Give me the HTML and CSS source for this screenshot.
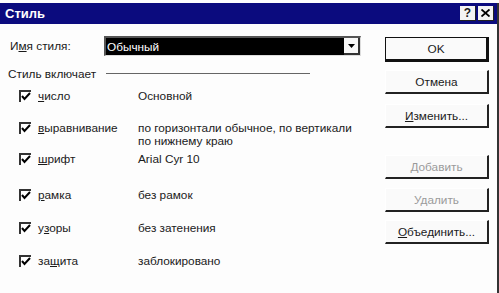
FILE: index.html
```html
<!DOCTYPE html>
<html lang="ru">
<head>
  <meta charset="UTF-8" />
  <title>Стиль</title>
  <link rel="stylesheet" href="styles.css">
</head>
<body>
  <div class="window">
    <div class="titlebar">
      <span class="title">Стиль</span>
      <div class="caption-btns">
        <span class="cap-btn">?</span>
        <span class="cap-btn close">
          <svg width="9" height="8" viewBox="0 0 9 8"><path d="M0.5 0.5 L8.5 7.5 M8.5 0.5 L0.5 7.5" stroke="#000" stroke-width="1.8" fill="none"/></svg>
        </span>
      </div>
    </div>

    <div class="content">
      <div class="left">
        <div class="name-row">
          <label class="name-label">И<u>м</u>я стиля:</label>
          <div class="combo">
            <span class="combo-text">Обычный</span>
            <span class="combo-btn">
              <svg width="7" height="4" viewBox="0 0 7 4"><path d="M0 0 H7 L3.5 4 Z" fill="#000"/></svg>
            </span>
          </div>
        </div>

        <div class="group-head">
          <span>Стиль включает</span>
          <span class="group-line"></span>
        </div>

        <div class="items">
          <div class="item r1">
            <span class="check"><svg width="10" height="10" viewBox="0 0 10 10"><path d="M1 4 L3.5 7 L9 1" stroke="#000" stroke-width="2" fill="none"/></svg></span>
            <span class="item-name"><u>ч</u>исло</span>
            <span class="item-desc">Основной</span>
          </div>
          <div class="item r2">
            <span class="check"><svg width="10" height="10" viewBox="0 0 10 10"><path d="M1 4 L3.5 7 L9 1" stroke="#000" stroke-width="2" fill="none"/></svg></span>
            <span class="item-name"><u>в</u>ыравнивание</span>
            <span class="item-desc">по горизонтали обычное, по вертикали<br>по нижнему краю</span>
          </div>
          <div class="item r3">
            <span class="check"><svg width="10" height="10" viewBox="0 0 10 10"><path d="M1 4 L3.5 7 L9 1" stroke="#000" stroke-width="2" fill="none"/></svg></span>
            <span class="item-name"><u>ш</u>рифт</span>
            <span class="item-desc">Arial Cyr 10</span>
          </div>
          <div class="item r4">
            <span class="check"><svg width="10" height="10" viewBox="0 0 10 10"><path d="M1 4 L3.5 7 L9 1" stroke="#000" stroke-width="2" fill="none"/></svg></span>
            <span class="item-name"><u>р</u>амка</span>
            <span class="item-desc">без рамок</span>
          </div>
          <div class="item r5">
            <span class="check"><svg width="10" height="10" viewBox="0 0 10 10"><path d="M1 4 L3.5 7 L9 1" stroke="#000" stroke-width="2" fill="none"/></svg></span>
            <span class="item-name">у<u>з</u>оры</span>
            <span class="item-desc">без затенения</span>
          </div>
          <div class="item r6">
            <span class="check"><svg width="10" height="10" viewBox="0 0 10 10"><path d="M1 4 L3.5 7 L9 1" stroke="#000" stroke-width="2" fill="none"/></svg></span>
            <span class="item-name">за<u>щ</u>ита</span>
            <span class="item-desc">заблокировано</span>
          </div>
        </div>
      </div>

      <div class="right">
        <button class="btn default b1">OK</button>
        <button class="btn b2">Отмена</button>
        <button class="btn b3"><u>И</u>зменить...</button>
        <button class="btn disabled b4">Добавить</button>
        <button class="btn disabled b5">Удалить</button>
        <button class="btn b6"><u>О</u>бъединить...</button>
      </div>
    </div>
  </div>
</body>
</html>
```

FILE: styles.css
```css
/* диалог Стиль */
body {
  margin: 0;
  background: #fdfdfd;
  font-family: 'Liberation Sans', Arial, sans-serif;
  font-size: 11.8px;
  color: #1a1a1a;
}

.window {
  width: 497px;
  height: 290px;
  border-right: 2px solid #333;
  border-bottom: 3px solid #222;
  background: #fdfdfd;
}

.titlebar {
  margin-top: 3px;
  height: 21px;
  background: #0b0b7e;
  display: flex;
  align-items: center;
  justify-content: space-between;
  padding: 0 3px 0 5px;
}

.title {
  color: #fff;
  font-weight: bold;
  font-size: 13px;
}

.caption-btns {
  display: flex;
  gap: 2px;
}

.cap-btn {
  width: 15px;
  height: 14px;
  background: #f4f4f4;
  border-right: 1px solid #222;
  border-bottom: 1px solid #222;
  font-weight: bold;
  font-size: 12px;
  line-height: 14px;
  display: flex;
  align-items: center;
  justify-content: center;
}

.content {
  display: flex;
}

.left {
  width: 375px;
  padding-left: 10px;
  box-sizing: border-box;
}

.name-row {
  margin-top: 12px;
  height: 20px;
  display: flex;
  align-items: center;
}

.name-label {
  width: 94px;
}

.combo {
  width: 257px;
  height: 20px;
  box-sizing: border-box;
  border-top: 2px solid #555;
  border-left: 2px solid #555;
  border-right: 1px solid #ddd;
  border-bottom: 1px solid #ddd;
  background: #000;
  display: flex;
  align-items: center;
  justify-content: space-between;
}

.combo-text {
  color: #fff;
  padding-left: 1px;
}

.combo-btn {
  width: 16px;
  height: 17px;
  box-sizing: border-box;
  background: #f8f8f8;
  border-right: 2px solid #333;
  border-bottom: 2px solid #333;
  display: flex;
  align-items: center;
  justify-content: center;
}

.group-head {
  margin-top: 10px;
  margin-left: -2px;
  height: 15px;
  display: flex;
  align-items: center;
}

.group-line {
  margin-left: 10px;
  width: 204px;
  border-top: 1px solid #666;
}

.items {
  padding-left: 9px;
}

.item {
  display: flex;
  align-items: flex-start;
  line-height: 15px;
}

.r1 { margin-top: 8px; }
.r2 { margin-top: 17px; }
.r3 { margin-top: 4px; }
.r4 { margin-top: 21px; }
.r5 { margin-top: 18px; }
.r6 { margin-top: 18px; }

.check {
  width: 12px;
  height: 12px;
  box-sizing: border-box;
  border-top: 2px solid #333;
  border-left: 2px solid #333;
  background: #fff;
  margin-top: 1px;
  margin-right: 7px;
  display: flex;
}

.item-name {
  width: 100px;
}

.item-desc {
  white-space: nowrap;
  line-height: 13px;
  padding-top: 1px;
}

.right {
  width: 104px;
  margin-left: 10px;
  display: flex;
  flex-direction: column;
}

.btn {
  height: 24px;
  width: 104px;
  padding: 0;
  font-family: inherit;
  font-size: 11.8px;
  color: #1a1a1a;
  background: #fafafa;
  border: none;
  border-top: 1px solid #fff;
  border-left: 1px solid #fff;
  border-right: 2px solid #222;
  border-bottom: 2px solid #222;
}

.btn.default {
  border: 1px solid #111;
  border-right: 3px solid #111;
  border-bottom: 3px solid #111;
}

.btn.disabled {
  color: #9a9a9a;
}

.b1 { margin-top: 13px; height: 25px; }
.b2 { margin-top: 8px; }
.b3 { margin-top: 10px; }
.b4 { margin-top: 27px; }
.b5 { margin-top: 9px; }
.b6 { margin-top: 8px; }
```
